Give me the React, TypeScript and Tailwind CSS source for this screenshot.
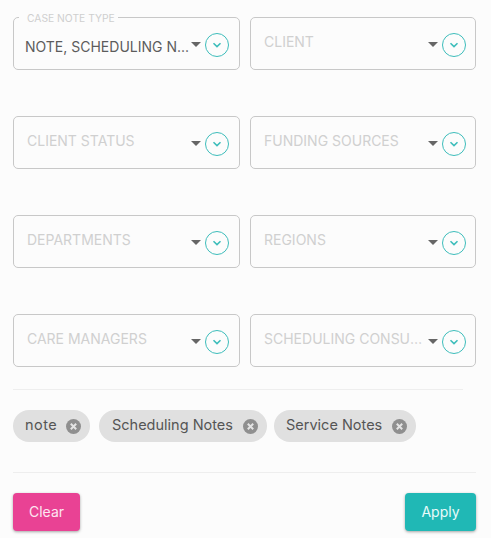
interface FilterField {
  label: string
  value?: string
}

const fields: FilterField[] = [
  { label: 'CASE NOTE TYPE', value: 'NOTE, SCHEDULING N...' },
  { label: 'CLIENT' },
  { label: 'CLIENT STATUS' },
  { label: 'FUNDING SOURCES' },
  { label: 'DEPARTMENTS' },
  { label: 'REGIONS' },
  { label: 'CARE MANAGERS' },
  { label: 'SCHEDULING CONSULTANTS' },
]

const chips = [
  { label: 'note', className: 'w-[77px] tracking-[0.5px]' },
  { label: 'Scheduling Notes', className: 'ml-[9px] w-[168px] pl-[13px]' },
  { label: 'Service Notes', className: 'ml-[7px] w-[142px]' },
]

function FilterSelect({ label, value }: FilterField) {
  return (
    <div className="relative h-[53px] rounded-[5px] border border-[#c8c8c8]">
      {value && (
        <span className="absolute -top-[6px] left-[5px] bg-[#fcfcfc] pl-2 pr-[3px] text-[10.3px] leading-[12px] text-[#cfcfcf]">
          {label}
        </span>
      )}
      {value ? (
        <div className="ml-[11px] mt-[19px] w-[166px] whitespace-nowrap text-[14px] leading-[20px] text-[#5c5c5c]">
          {value}
        </div>
      ) : (
        <div className="ml-[13px] mt-[14px] w-[160px] truncate text-[14px] leading-[20px] text-[#d0d0d0]">
          {label}
        </div>
      )}
      <span className="absolute left-[177px] top-[24px] h-0 w-0 border-x-[5px] border-t-[5px] border-x-transparent border-t-[#666666]" />
      <span className="absolute left-[191px] top-[15px] flex h-6 w-6 items-center justify-center rounded-full border border-[#3dbdbb] bg-[#fcfcfc]">
        <svg width="10" height="6" viewBox="0 0 10 6" fill="none" stroke="#3dbdbb" strokeWidth="1.6">
          <path d="M1.5 1.2 5 4.6l3.5-3.4" />
        </svg>
      </span>
    </div>
  )
}

export default function App() {
  return (
    <div className="h-[538px] w-[491px] overflow-hidden bg-[#fcfcfc] pl-[13px] pr-[15px] pt-[17px] font-['Inter',sans-serif]">
      <div className="grid grid-cols-[227px_226px] gap-x-[10px] gap-y-[46px]">
        {fields.map((field) => (
          <FilterSelect key={field.label} {...field} />
        ))}
      </div>

      <div className="mr-[13px] mt-[22px] border-t border-[#eeeeee]" />

      <div className="mt-5 flex">
        {chips.map((chip) => (
          <div
            key={chip.label}
            className={`flex h-8 items-center justify-between rounded-2xl bg-[#e0e0e0] pl-3 pr-[9px] text-[14.5px] text-[#555555] ${chip.className}`}
          >
            <span className="pb-[3px]">{chip.label}</span>
            <svg width="15" height="15" viewBox="0 0 15 15">
              <circle cx="7.5" cy="7.5" r="7.5" fill="#8f8f8f" />
              <path d="M4.8 4.8l5.4 5.4M10.2 4.8l-5.4 5.4" stroke="#e4e4e4" strokeWidth="2" />
            </svg>
          </div>
        ))}
      </div>

      <div className="mt-[30px] border-t border-[#eeeeee]" />

      <div className="mt-5 flex justify-between">
        <button className="h-[38px] w-[67px] rounded-[4px] bg-[#e94294] pb-[2px] text-[14px] text-[#fde6f1] shadow-[0_1px_3px_rgba(0,0,0,0.35)]">
          Clear
        </button>
        <button className="h-[38px] w-[71px] rounded-[4px] bg-[#20b8b5] pb-[2px] text-[14px] text-[#e9fbfa] shadow-[0_1px_3px_rgba(0,0,0,0.35)]">
          Apply
        </button>
      </div>
    </div>
  )
}
